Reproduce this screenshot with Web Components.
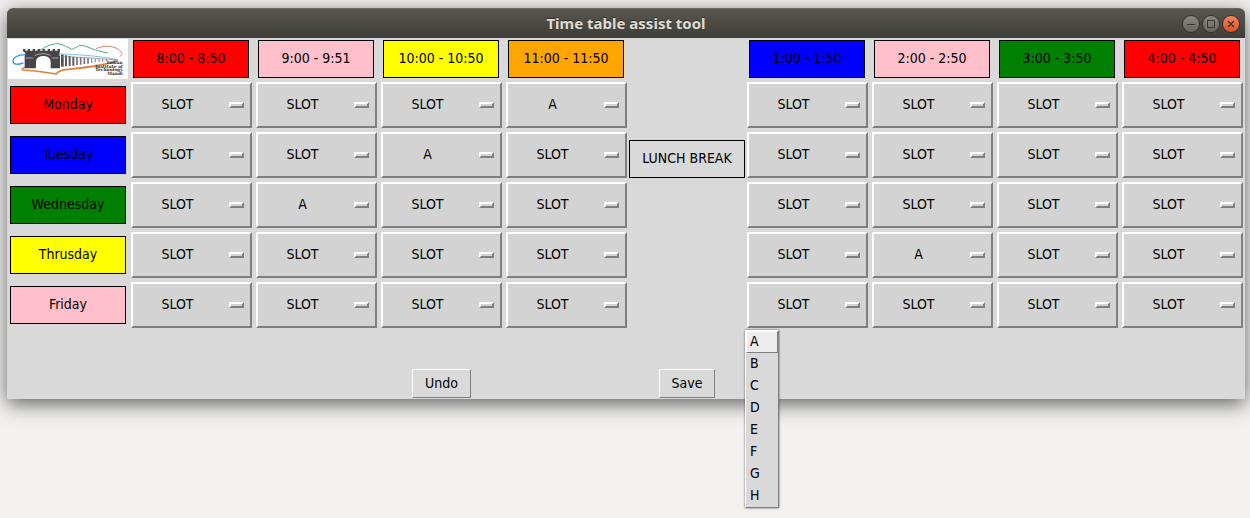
<!DOCTYPE html>
<html lang="en">
<head>
<meta charset="utf-8">
<title>Time table assist tool</title>
<style>
  body {
    box-sizing: border-box;
    min-height: 100vh;
    margin: 0;
    padding: 8px 5px 8px 7px;
    background: #f2f1f0;
    color: #000;
    font: 14px/16px "DejaVu Sans Condensed", "DejaVu Sans", sans-serif;
  }
</style>
</head>
<body>
<app-window>
  <span slot="title">Time table assist tool</span>
  <time-table></time-table>
  <action-bar>
    <tool-button slot="left">Undo</tool-button>
    <tool-button slot="right">Save</tool-button>
  </action-bar>
</app-window>

<template id="app-window">
  <style>
    :host { display: block; border-radius: 6px 6px 0 0; background: #d9d9d9; box-shadow: 0 5px 20px rgba(0,0,0,.6); }
    header {
      display: grid; grid-template-columns: 1fr auto 1fr; align-items: center;
      height: 30px; box-sizing: border-box; padding: 0 5px;
      border-radius: 6px 6px 0 0; border-top: 1px solid #6a685f;
      background: linear-gradient(#59574e, #3e3d39);
    }
    h1 { grid-column: 2; margin: 0; padding-bottom: 2px; font: bold 15px/18px "Noto Sans", sans-serif; color: #dfdbd2; text-shadow: 0 -1px #2f2e2a; }
    nav { justify-self: end; display: flex; gap: 2px; }
    button {
      width: 18px; height: 18px; padding: 0; border: 1px solid #34332f; border-radius: 50%;
      background: linear-gradient(#8b8981, #68665f); display: grid; place-items: center;
    }
    button.close { background: linear-gradient(#f4855f, #e2501f); }
    svg { display: block; fill: none; stroke: #3a3934; }
  </style>
  <header>
    <h1><slot name="title"></slot></h1>
    <nav aria-label="Window">
      <button type="button" aria-label="Minimize"><svg width="16" height="16"><path d="M4 8.500H12"/></svg></button>
      <button type="button" aria-label="Maximize"><svg width="16" height="16"><path d="M4.500 4.500H11.500V11.500H4.500Z"/></svg></button>
      <button type="button" class="close" aria-label="Close"><svg width="16" height="16"><path d="M5 5L11 11M11 5L5 11" stroke-width="1.500"/></svg></button>
    </nav>
  </header>
  <slot></slot>
</template>

<template id="color-label">
  <style>
    :host { display: block; box-sizing: border-box; height: 38px; border: 1px solid #000; background: var(--fill, transparent); line-height: 34px; text-align: center; white-space: nowrap; }
  </style>
  <slot></slot>
</template>

<template id="slot-picker">
  <style>
    :host { display: grid; position: relative; }
    select, .mark { grid-area: 1 / 1; }
    select {
      appearance: none; width: 100%; height: 46px; margin: 0; padding: 0 28px 2px 0; border-radius: 0;
      border: 2px solid; border-color: #fff #7f7f7f #7f7f7f #fff; background: #d3d3d3;
      font: inherit; color: inherit; text-align: center; text-align-last: center;
    }
    .mark {
      place-self: center end; box-sizing: border-box; width: 15px; height: 6px; margin-right: 8px;
      border: 2px solid; border-color: #fff #7f7f7f #7f7f7f #fff; background: #d3d3d3; pointer-events: none;
    }
    ul {
      position: absolute; z-index: 1; top: 48px; left: -2px; width: 34px; box-sizing: border-box;
      margin: 0; padding: 0; list-style: none; background: #d9d9d9;
      border: 1px solid; border-color: #fff #7f7f7f #7f7f7f #fff; box-shadow: 0 0 2px rgba(0,0,0,.6);
    }
    li button {
      display: block; width: 100%; height: 22px; box-sizing: border-box; padding: 0 0 2px 3px;
      border: 1px solid transparent; background: none; font: inherit; color: inherit; text-align: left;
    }
    li button.active { background: #ececec; border-color: #fff #7f7f7f #7f7f7f #fff; }
  </style>
  <select></select>
  <span class="mark"></span>
</template>

<template id="institute-logo">
  <style>
    :host { display: block; width: 120px; height: 40px; background: #fff; }
    svg { display: block; }
    text { font: bold 13px "DejaVu Serif", serif; fill: #2b292b; text-anchor: end; }
  </style>
  <svg width="120" height="40" viewBox="0 0 360 120" fill="none" role="img" aria-label="Indian Institute of Technology Mandi">
    <path d="M84 38C104 32 118 17 136 16C152 10 170 20 191 31C204 28 212 16 224 20C242 23 252 33 300 42" stroke="#4fa884" stroke-width="3"/>
    <path d="M264 29C285 19 318 19 334 33C345 43 342 50 335 52" stroke="#d08470" stroke-width="3"/>
    <path d="M54 47C30 46 14 56 15 67C16 77 28 78 46 72" stroke="#2b9ad6" stroke-width="4"/>
    <path d="M152 45C205 46 268 50 330 62" stroke="#7fc3e8" stroke-width="3"/>
    <path d="M62 84C48 84 40 88 44 93C70 94 115 100 144 105C152 95 165 92 180 91C240 86 296 76 330 65" stroke="#e0823c" stroke-width="5"/>
    <path d="M45 30h7v5h7v-5h7v5h8v-5h7v5h8v-5h7v5h8v-5h7v5h8v-5h7v5h8v-5h7v5h8v-5h7v8l-2 4v8h2v38h-28V66c-2-10-10-15-22-15s-20 5-22 15v22H50V50l2-2v-6l-7-5Z" fill="#48454a"/>
    <path d="M80 50C94 42 116 42 128 50M53 57H76M131 57H151" stroke="#d7d5d8" stroke-width="2"/>
    <path d="M163 47V83" stroke="#514d52" stroke-width="8"/>
    <path d="M174 49V82M185 51V81M196 53V80" stroke="#5c585e" stroke-width="6"/>
    <path d="M207 54V78M218 55V77M229 56V75M240 57V74" stroke="#757077" stroke-width="5"/>
    <path d="M251 58V72M262 59V70M273 60V69M284 60V68M295 61V67" stroke="#9a959b" stroke-width="4"/>
    <path d="M158 53C210 54 260 57 325 63" stroke="#827d84" stroke-width="2"/>
    <text x="344" y="75">Indian</text>
    <text x="344" y="86">Institute of</text>
    <text x="344" y="97">Technology</text>
    <text x="344" y="108">Mandi</text>
  </svg>
</template>

<template id="time-table">
  <style>
    :host { display: block; }
    table { width: 100%; border-collapse: collapse; table-layout: fixed; }
    .day { width: 122px; }
    .lunch { width: 116px; }
    th, td { padding: 0; font-weight: normal; }
    tr { height: 50px; }
    tr.hours { height: 42px; }
    th color-label { margin: 0 3px; }
    .hours th color-label { margin: 0 5px 0 4px; }
    institute-logo { margin-left: 1px; }
    slot-picker { margin: 0 2px; }
  </style>
  <table></table>
</template>

<template id="action-bar">
  <style>
    :host { display: grid; grid-template-columns: 122px repeat(4, 1fr) 116px repeat(4, 1fr); justify-items: center; padding: 39px 0 1px; }
    slot { display: block; }
    slot[name="left"] { grid-column: 4; }
    slot[name="right"] { grid-column: 6; }
  </style>
  <slot name="left"></slot>
  <slot name="right"></slot>
</template>

<template id="tool-button">
  <style>
    :host { display: block; }
    button {
      display: block; height: 29px; padding: 0 12px 2px; border-radius: 0; border: 1px solid;
      border-color: #fff #7f7f7f #7f7f7f #fff; background: #d9d9d9; font: inherit; color: inherit;
    }
  </style>
  <button type="button"><slot></slot></button>
</template>

<script>
  class Templated extends HTMLElement {
    constructor() {
      super();
      const template = document.getElementById(this.localName);
      this.attachShadow({ mode: "open" }).append(template.content.cloneNode(true));
    }
  }

  const SLOTS = ["A", "B", "C", "D", "E", "F", "G", "H"];

  customElements.define("app-window", class extends Templated {});
  customElements.define("action-bar", class extends Templated {});
  customElements.define("tool-button", class extends Templated {});
  customElements.define("institute-logo", class extends Templated {});

  customElements.define("color-label", class extends Templated {
    connectedCallback() {
      const color = this.getAttribute("color");
      if (color) this.style.setProperty("--fill", color);
    }
  });

  customElements.define("slot-picker", class extends Templated {
    connectedCallback() {
      const select = this.shadowRoot.querySelector("select");
      select.setAttribute("aria-label", this.getAttribute("label"));
      for (const name of ["SLOT", ...SLOTS]) select.add(new Option(name));
      select.value = this.getAttribute("value") || "SLOT";
      if (this.hasAttribute("open")) this.showMenu(select);
    }
    showMenu(select) {
      const list = document.createElement("ul");
      SLOTS.forEach((name, i) => {
        const item = document.createElement("li");
        const button = document.createElement("button");
        button.type = "button";
        button.textContent = name;
        button.className = i === 0 ? "active" : "";
        button.onclick = () => { select.value = name; list.remove(); };
        item.append(button);
        list.append(item);
      });
      this.shadowRoot.append(list);
    }
  });

  customElements.define("time-table", class extends Templated {
    connectedCallback() {
      const morning = [["8:00 - 8:50", "red"], ["9:00 - 9:51", "pink"], ["10:00 - 10:50", "yellow"], ["11:00 - 11:50", "orange"]];
      const afternoon = [["1:00 - 1:50", "blue"], ["2:00 - 2:50", "pink"], ["3:00 - 3:50", "green"], ["4:00 - 4:50", "red"]];
      const hours = [...morning, ...afternoon];
      const days = [["Monday", "red", 3], ["Tuesday", "blue", 2], ["Wednesday", "green", 1], ["Thrusday", "yellow", 5], ["Friday", "pink", -1]];
      const head = ([text, color]) => `<th scope="col"><color-label color="${color}">${text}</color-label></th>`;

      // The lunch cell spans the hours row and the first four days; Friday has an empty cell in its place.
      this.shadowRoot.querySelector("table").innerHTML = `
        <colgroup><col class="day"><col span="4"><col class="lunch"><col span="4"></colgroup>
        <tr class="hours"><td><institute-logo></institute-logo></td>${morning.map(head).join("")}
          <td rowspan="5"><color-label>LUNCH BREAK</color-label></td>${afternoon.map(head).join("")}</tr>
        ${days.map(([day, color, taken]) => `<tr><th scope="row"><color-label color="${color}">${day}</color-label></th>${
          hours.map(([time], i) => {
            const last = day === "Friday" && i === 4;
            return `${last ? "<td></td>" : ""}<td><slot-picker label="${day} ${time}" value="${i === taken ? "A" : "SLOT"}"${last ? " open" : ""}></slot-picker></td>`;
          }).join("")}</tr>`).join("")}`;
    }
  });
</script>
</body>
</html>
